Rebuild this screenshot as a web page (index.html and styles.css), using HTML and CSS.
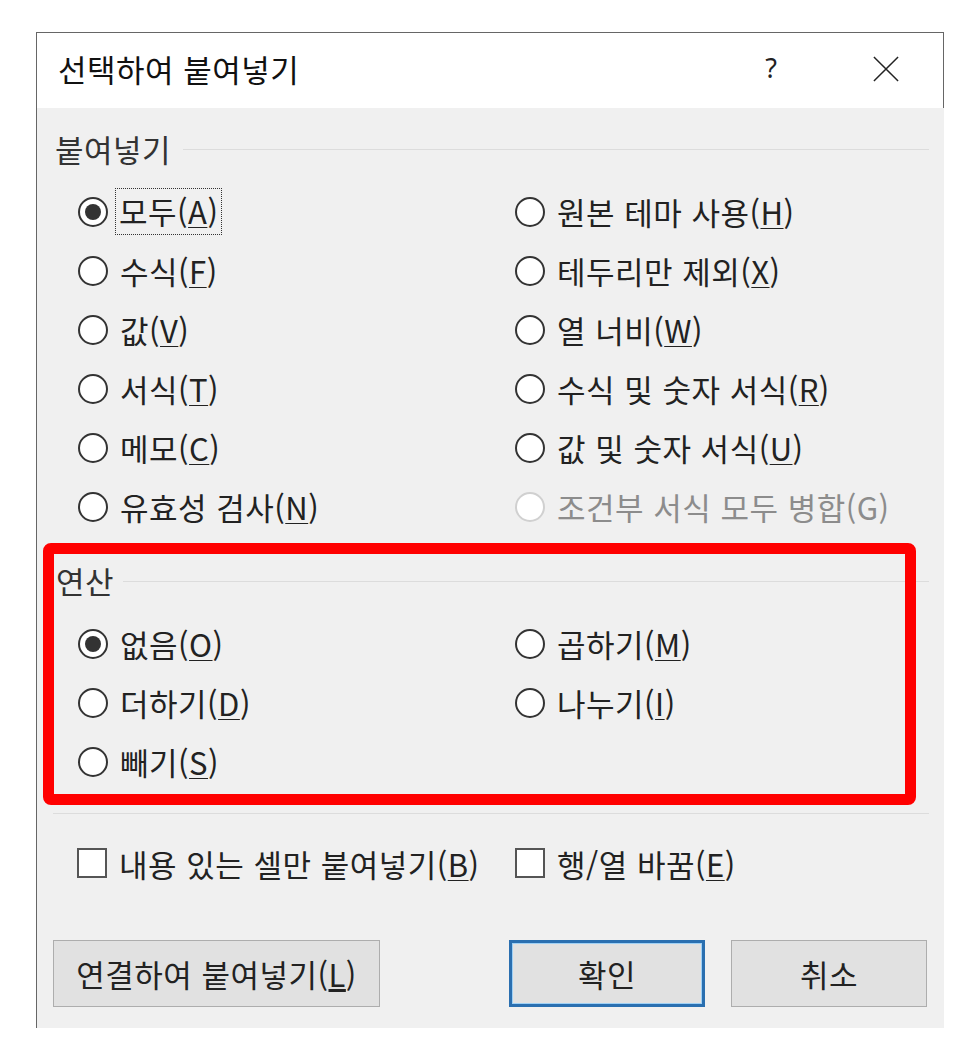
FILE: index.html
```html
<!DOCTYPE html>
<html lang="ko">
<head>
  <meta charset="UTF-8">
  <title>선택하여 붙여넣기</title>
  <link rel="stylesheet" href="styles.css">
</head>
<body>

  <div class="dialog">
    <div class="titlebar">
      <span class="title">선택하여 붙여넣기</span>
      <span class="help">?</span>
      <svg class="close" width="28" height="28" viewBox="0 0 28 28">
        <path d="M1 1 L27 27 M27 1 L1 27" stroke="#222" stroke-width="1.6" fill="none"/>
      </svg>
    </div>

    <div class="content">
      <div class="group-label"><span>붙여넣기</span></div>
      <div class="options">
        <div class="opt"><span class="radio checked"></span><span class="focus">모두(<u>A</u>)</span></div>
        <div class="opt"><span class="radio"></span>원본 테마 사용(<u>H</u>)</div>
        <div class="opt"><span class="radio"></span>수식(<u>F</u>)</div>
        <div class="opt"><span class="radio"></span>테두리만 제외(<u>X</u>)</div>
        <div class="opt"><span class="radio"></span>값(<u>V</u>)</div>
        <div class="opt"><span class="radio"></span>열 너비(<u>W</u>)</div>
        <div class="opt"><span class="radio"></span>서식(<u>T</u>)</div>
        <div class="opt"><span class="radio"></span>수식 및 숫자 서식(<u>R</u>)</div>
        <div class="opt"><span class="radio"></span>메모(<u>C</u>)</div>
        <div class="opt"><span class="radio"></span>값 및 숫자 서식(<u>U</u>)</div>
        <div class="opt"><span class="radio"></span>유효성 검사(<u>N</u>)</div>
        <div class="opt disabled"><span class="radio"></span>조건부 서식 모두 병합(G)</div>
      </div>

      <div class="group-label calc"><span>연산</span></div>
      <div class="options ops">
        <div class="opt"><span class="radio checked"></span>없음(<u>O</u>)</div>
        <div class="opt"><span class="radio"></span>곱하기(<u>M</u>)</div>
        <div class="opt"><span class="radio"></span>더하기(<u>D</u>)</div>
        <div class="opt"><span class="radio"></span>나누기(<u>I</u>)</div>
        <div class="opt"><span class="radio"></span>빼기(<u>S</u>)</div>
      </div>

      <div class="separator"></div>

      <div class="options checks">
        <div class="opt"><span class="checkbox"></span>내용 있는 셀만 붙여넣기(<u>B</u>)</div>
        <div class="opt"><span class="checkbox"></span>행/열 바꿈(<u>E</u>)</div>
      </div>

      <div class="buttons">
        <button class="btn link-btn">연결하여 붙여넣기(<u>L</u>)</button>
        <button class="btn default">확인</button>
        <button class="btn">취소</button>
      </div>

      <!-- 강조 표시 -->
      <div class="highlight"></div>
    </div>
  </div>

</body>
</html>
```
FILE: styles.css
```css
body {
  margin: 0;
  background: #fff;
  font-family: "Noto Sans CJK KR", "Noto Sans", sans-serif;
  color: #222;
}

.dialog {
  margin: 32px 0 0 36px;
  width: 908px;
}

.titlebar {
  display: flex;
  align-items: center;
  height: 75px;
  background: #fff;
  border-top: 1px solid #666;
  border-left: 1px solid #666;
  border-right: 1px solid #666;
}

.title {
  flex: 1;
  padding-left: 21px;
  font-size: 31px;
  letter-spacing: 0.5px;
  color: #111;
  padding-bottom: 4px;
}

.help {
  font-size: 27px;
  font-family: "Noto Sans", sans-serif;
  color: #222;
  margin-right: 96px;
  padding-bottom: 6px;
}

.close {
  width: 26px;
  height: 26px;
  margin-right: 44px;
  margin-bottom: 4px;
}

.content {
  position: relative;
  height: 900px;
  padding-top: 20px;
  background: #f0f0f0;
  border-left: 1px solid #666;
}

.group-label {
  display: flex;
  align-items: center;
  gap: 12px;
  height: 40px;
  padding: 0 15px 0 18px;
  font-size: 31px;
  letter-spacing: 0.5px;
  color: #333;
}

.group-label::after {
  content: "";
  flex: 1;
  height: 1px;
  background: #dcdcdc;
  margin-top: 2px;
}

.group-label.calc {
  margin-top: 24px;
  padding-left: 19px;
  gap: 9px;
}

.options {
  display: grid;
  grid-template-columns: 437px auto;
  grid-auto-rows: 59px;
  margin-top: 14px;
  padding-left: 41px;
}

.opt {
  display: flex;
  align-items: center;
  font-size: 31px;
  letter-spacing: 0.5px;
  white-space: nowrap;
  color: #222;
}

.opt u {
  text-underline-offset: 3px;
  text-decoration-thickness: 1px;
}

.radio {
  width: 30px;
  height: 30px;
  box-sizing: border-box;
  border: 2px solid #333;
  border-radius: 50%;
  background: #fff;
  margin-right: 12px;
  display: flex;
  align-items: center;
  justify-content: center;
  flex-shrink: 0;
}

.radio.checked::after {
  content: "";
  width: 16px;
  height: 16px;
  border-radius: 50%;
  background: #333;
}

.opt.disabled {
  color: #8c8c8c;
}

.opt.disabled .radio {
  border-color: #d0d0d0;
}

.focus {
  outline: 1px dotted #333;
  outline-offset: 0;
  line-height: 1.25;
  padding: 3px 3px;
  margin-left: -4px;
}

.ops {
  margin-top: 14px;
}

.separator {
  height: 1px;
  background: #dcdcdc;
  margin: 22px 15px 0 16px;
}

.checks {
  grid-auto-rows: 58px;
  margin-top: 20px;
  padding-left: 40px;
  grid-template-columns: 438px auto;
}

.checkbox {
  width: 30px;
  height: 30px;
  box-sizing: border-box;
  border: 2px solid #555;
  background: #fff;
  margin-right: 12px;
  flex-shrink: 0;
}

.buttons {
  display: flex;
  gap: 26px;
  margin-top: 48px;
  padding: 0 17px 0 16px;
}

.btn {
  height: 67px;
  width: 196px;
  box-sizing: border-box;
  background: #e1e1e1;
  border: 1px solid #adadad;
  font-family: "Noto Sans CJK KR", "Noto Sans", sans-serif;
  font-size: 31px;
  letter-spacing: 0.5px;
  color: #222;
  padding: 0;
}

.link-btn {
  width: 327px;
  margin-right: auto;
}

.btn.default {
  border: 3px solid #2a6fb0;
  box-shadow: inset 0 0 0 1px #9ed0f5;
}

.highlight {
  position: absolute;
  left: 6px;
  top: 435px;
  width: 873px;
  height: 262px;
  box-sizing: border-box;
  border: 11px solid #f00;
  border-radius: 8px;
}
```
